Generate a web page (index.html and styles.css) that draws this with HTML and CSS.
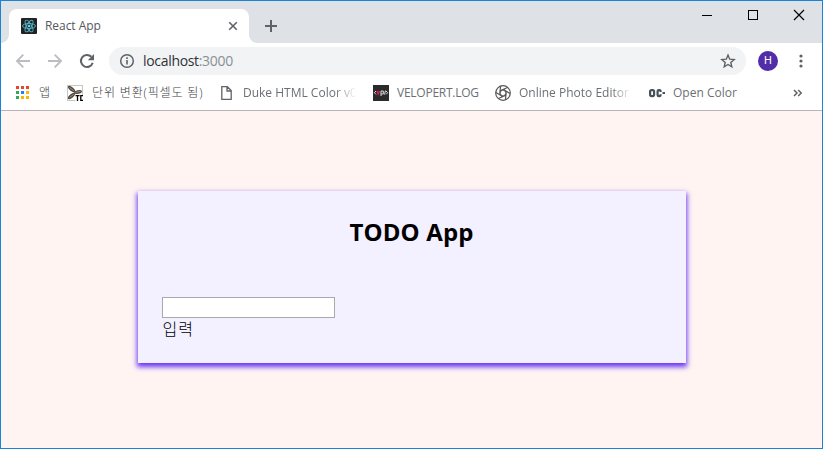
FILE: index.html
```html
<!DOCTYPE html>
<html lang="ko">
<head>
<meta charset="utf-8">
<title>React App</title>
<link rel="stylesheet" href="styles.css">
</head>
<body>
<div class="window">
  <header class="tabstrip">
    <div class="tab">
      <svg class="favicon" width="16" height="16" viewBox="0 0 16 16"><rect width="16" height="16" rx="1" fill="#222"/><g fill="none" stroke="#53b5cd" stroke-width=".9"><ellipse cx="8" cy="8" rx="6.5" ry="2.5"/><ellipse cx="8" cy="8" rx="6.5" ry="2.5" transform="rotate(60 8 8)"/><ellipse cx="8" cy="8" rx="6.5" ry="2.5" transform="rotate(120 8 8)"/></g><circle cx="8" cy="8" r="1.3" fill="#61dafb"/></svg>
      <span class="tab-title">React App</span>
      <svg class="tab-close" width="10" height="10" viewBox="0 0 10 10"><path d="M1.2 1.2l7.6 7.6M8.8 1.2L1.2 8.8" stroke="#5f6368" stroke-width="1.6"/></svg>
    </div>
    <svg class="new-tab" width="14" height="14" viewBox="0 0 14 14"><path d="M7 1v12M1 7h12" stroke="#5f6368" stroke-width="2"/></svg>
    <div class="controls">
      <svg width="46" height="28" viewBox="0 0 46 28"><path d="M18 14.500h10" stroke="#000"/></svg>
      <svg width="46" height="28" viewBox="0 0 46 28"><rect x="18.500" y="9.500" width="9" height="9" fill="none" stroke="#000"/></svg>
      <svg width="46" height="28" viewBox="0 0 46 28"><path d="M18 9l10 10M28 9L18 19" stroke="#000" stroke-width="1.200"/></svg>
    </div>
  </header>
  <nav class="toolbar">
    <svg class="nav" width="16" height="16" viewBox="0 0 16 16"><path d="M15 8H2.500M8.300 1.700L2 8l6.300 6.300" fill="none" stroke="#bbbdc0" stroke-width="1.900"/></svg>
    <svg class="nav" width="16" height="16" viewBox="0 0 16 16"><path d="M1 8h12.500M7.700 1.700L14 8l-6.300 6.300" fill="none" stroke="#bbbdc0" stroke-width="1.900"/></svg>
    <svg class="nav" width="16" height="16" viewBox="0 0 16 16"><path d="M13.700 9.700A6 6 0 1 1 12.300 3.800" fill="none" stroke="#5f6368" stroke-width="2"/><path d="M15 1v6.200H8.800z" fill="#5f6368"/></svg>
    <div class="omnibox">
      <svg width="16" height="16" viewBox="0 0 16 16"><circle cx="8" cy="8" r="6.300" fill="none" stroke="#5f6368" stroke-width="1.500"/><path d="M8 7v4.500M8 4.300v1.600" stroke="#5f6368" stroke-width="1.600"/></svg>
      <span class="url">localhost<span class="port">:3000</span></span>
      <svg class="star" width="16" height="16" viewBox="0 0 16 16"><path d="M8 2.100l1.700 4.100 4.500.4-3.400 2.900 1 4.300L8 11.500l-3.800 2.300 1-4.300-3.400-2.900 4.500-.4z" fill="none" stroke="#5f6368" stroke-width="1.400"/></svg>
    </div>
    <span class="avatar">H</span>
    <svg class="menu" width="4" height="14" viewBox="0 0 4 14" fill="#5f6368"><circle cx="2" cy="2" r="1.600"/><circle cx="2" cy="7" r="1.600"/><circle cx="2" cy="12" r="1.600"/></svg>
  </nav>
  <nav class="bookmarks">
    <div class="bookmark apps">
      <svg width="13" height="13" viewBox="0 0 13 13"><path d="M0 0h3v3H0zM5 0h3v3H5zM10 0h3v3h-3z" fill="#ea4335"/><path d="M0 5h3v3H0zM0 10h3v3H0z" fill="#34a853"/><path d="M5 5h3v3H5z" fill="#1a83f7"/><path d="M10 5h3v3h-3zM5 10h3v3H5zM10 10h3v3h-3z" fill="#fbb505"/></svg>
      <span class="hangul">앱</span>
    </div>
    <div class="bookmark unit">
      <svg width="16" height="16" viewBox="0 0 16 16"><rect x=".5" y=".5" width="15" height="15" fill="#fff" stroke="#c9c5bf"/><g fill="#51473e"><ellipse cx="4.500" cy="4" rx="4.300" ry="1.900" transform="rotate(40 4.500 4)"/><ellipse cx="11" cy="7" rx="4" ry="1.900" transform="rotate(-10 11 7)"/><ellipse cx="4.500" cy="11" rx="4.300" ry="1.900" transform="rotate(-40 4.500 11)"/></g><path d="M2.500 2.500l4 3M8.500 7.300l5-.8M2.500 12.500l4-3" stroke="#c0b4a5" stroke-width=".7"/><path d="M8.500 10h7.500v6H8.500z" fill="#fff"/><path d="M8.500 10.700h4M10.500 10v6M16 10.700h-2.200v4.600H16" fill="none" stroke="#000" stroke-width="1.300"/></svg>
      <span class="hangul">단위 변환(픽셀도 됨)</span>
    </div>
    <div class="bookmark duke">
      <svg width="16" height="16" viewBox="0 0 16 16"><path d="M2.800 1.700h5.500l3.900 3.900v8.700H2.800zM8 2v4h4" fill="none" stroke="#5f6368" stroke-width="1.300"/></svg>
      <span class="fade">Duke HTML Color v0</span>
    </div>
    <div class="bookmark velo">
      <svg width="16" height="16" viewBox="0 0 16 16"><rect width="16" height="16" fill="#2b2b2b"/><g fill="none" stroke-width="1"><path d="M3 6L1.300 7.700 3 9.400M8 11V6h2.300v3H8M12.500 5.500l-1 4M13 6l1.700 1.700L13 9.400" stroke="#ddd"/><path d="M4 6l1.200 3L6.500 6" stroke="#e31b66" stroke-width="1.300"/></g></svg>
      <span class="log">VELOPERT.LOG</span>
    </div>
    <div class="bookmark photo">
      <svg width="16" height="16" viewBox="0 0 16 16" fill="none" stroke="#555" stroke-width="1.200"><circle cx="8" cy="8" r="7.300"/><path d="M6.400 5.200h3.200L11.200 8l-1.600 2.800H6.400L4.800 8zM6.400 5.200L12.500 2.500M9.600 5.200l5.400 3.300M11.200 8l-.8 6.800M9.600 10.800l-6.100 2.700M6.400 10.800L1 7.500M4.800 8l.8-6.800"/></svg>
      <span class="fade">Online Photo Editor</span>
    </div>
    <div class="bookmark open">
      <svg width="16" height="16" viewBox="0 0 16 16" fill="none" stroke="#495057" stroke-width="2.200"><rect x="1.100" y="5.100" width="4" height="6" rx="1.500"/><path d="M11.600 7V6.300q0-1.200-1.200-1.200h-.6q-1.200 0-1.200 1.200v3.600q0 1.200 1.200 1.200h.6q1.200 0 1.200-1.200v-.7M13.500 8H16"/></svg>
      <span>Open Color</span>
    </div>
    <svg class="more" width="10" height="8" viewBox="0 0 10 8"><path d="M1 1l3 3-3 3M5.200 1l3 3-3 3" fill="none" stroke="#5f6368" stroke-width="1.500"/></svg>
  </nav>
  <main class="page">
    <section class="card">
      <h1>TODO App</h1>
      <input type="text" aria-label="할 일">
      <div class="submit">입력</div>
    </section>
  </main>
</div>
</body>
</html>
```
FILE: styles.css
```css
* { box-sizing: border-box; }
body { margin: 0; font-family: "Open Sans", "Noto Sans CJK KR", sans-serif; }
svg { display: block; flex: none; }
.window { width: 823px; height: 449px; border: 1px solid #1883d7; display: flex; flex-direction: column; overflow: hidden; background: #fff; }
.tabstrip { height: 42px; flex: none; background: #dee1e6; display: flex; align-items: flex-start; }
.tab { position: relative; width: 240px; height: 34px; margin: 8px 0 0 8px; background: #fff; border-radius: 8px 8px 0 0; display: flex; align-items: center; padding: 0 11px 0 12px; }
.tab::before, .tab::after { content: ""; position: absolute; bottom: 0; width: 8px; height: 8px; }
.tab::before { left: -8px; background: radial-gradient(circle at 0 0, transparent 7.500px, #fff 8px); }
.tab::after { right: -8px; background: radial-gradient(circle at 100% 0, transparent 7.500px, #fff 8px); }
.tab-title { margin: -2px 0 0 8px; font-size: 12px; letter-spacing: -.05px; color: #54585c; }
.tab-close { margin-left: auto; }
.new-tab { margin: 18px 0 0 15px; }
.controls { display: flex; margin-left: auto; }
.toolbar { height: 36px; flex: none; display: flex; align-items: center; padding-left: 14px; }
.nav { margin-right: 16px; }
.omnibox { width: 637px; height: 28px; margin-left: -2px; border-radius: 14px; background: #f1f3f4; display: flex; align-items: center; padding: 0 10px; }
.url { margin: -1px 0 0 8px; font-size: 14px; color: #303134; white-space: nowrap; letter-spacing: -.32px; }
.port { color: #8a8f94; }
.star { margin-left: auto; }
.avatar { width: 20px; height: 20px; margin-left: 12px; border-radius: 50%; background: #512da8; color: #fff; font: 11px/20px Roboto, sans-serif; text-align: center; }
.menu { margin-left: 21px; }
.bookmarks { height: 32px; flex: none; border-bottom: 1px solid #b6b4b6; display: flex; align-items: center; padding: 0 19px 4px 15px; font-size: 12px; color: #6c7074; }
.bookmark { display: flex; align-items: center; flex: none; white-space: nowrap; height: 20px; line-height: 20px; }
.apps { width: 51px; gap: 10px; }
.unit { width: 152px; gap: 9px; }
.hangul { font-weight: 300; letter-spacing: .85px; color: #3c4043; }
.duke { width: 154px; gap: 8px; }
.velo { width: 122px; gap: 8px; }
.log { letter-spacing: -.25px; }
.photo { width: 154px; gap: 8px; }
.open { gap: 8px; }
.fade { width: 113px; overflow: hidden; -webkit-mask-image: linear-gradient(90deg, #000 82%, transparent); mask-image: linear-gradient(90deg, #000 82%, transparent); }
.more { margin-left: auto; }
.page { flex: 1; background: #fff4f2; padding-top: 80px; }
.card { width: 548px; height: 172px; margin: 0 auto; padding: 23px 24px; background: #f3f0ff; box-shadow: 0 3px 5px 1px #6b38f5; display: flex; flex-direction: column; align-items: flex-start; }
h1 { align-self: center; margin: 0; height: 36px; flex: none; font-size: 24px; line-height: 36px; font-weight: 700; letter-spacing: .15px; color: #000; }
input { width: 173px; height: 21px; flex: none; margin: 47px 0 0; padding: 1px; border: 1px solid #a9a9a9; background: #fff; }
.submit { padding-left: 1px; font-size: 16px; font-weight: 300; letter-spacing: 1px; line-height: 23px; color: #000; }
```
